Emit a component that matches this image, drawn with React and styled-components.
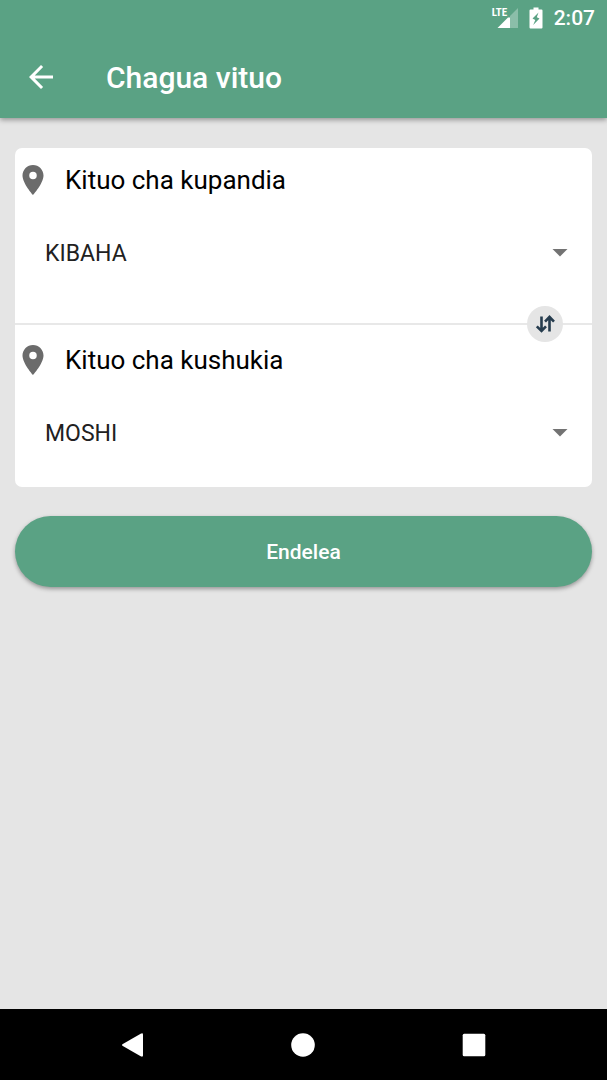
import React, { useState } from 'react';
import styled, { createGlobalStyle } from 'styled-components';

const GlobalStyle = createGlobalStyle`
  * {
    box-sizing: border-box;
  }

  body {
    margin: 0;
    background: #e5e5e5;
    font-family: Roboto, 'Liberation Sans', sans-serif;
  }

  button,
  select {
    font-family: inherit;
  }
`;

const Screen = styled.div`
  min-height: 100vh;
  display: flex;
  flex-direction: column;
`;

const Header = styled.header`
  background: #5aa284;
  color: #fff;
  box-shadow: 0 2px 5px rgba(0, 0, 0, 0.35);
`;

const StatusBar = styled.div`
  height: 36px;
  padding: 0 12px;
  display: flex;
  align-items: center;
  justify-content: flex-end;
  gap: 11px;
`;

const Signal = styled.div`
  position: relative;
  display: flex;
`;

const NetworkType = styled.span`
  position: absolute;
  top: 0;
  left: 0;
  font-family: 'Roboto Condensed', 'Liberation Sans Narrow', Roboto, sans-serif;
  font-size: 11px;
  font-weight: 700;
  line-height: 11px;
`;

const Clock = styled.span`
  font-size: 21px;
  font-weight: 500;
  line-height: 36px;
`;

const Toolbar = styled.div`
  height: 82px;
  padding: 0 23px;
  display: flex;
  align-items: center;
  gap: 47px;
`;

const IconButton = styled.button`
  display: flex;
  padding: 0;
  border: 0;
  background: none;
  color: inherit;
  cursor: pointer;
`;

const Title = styled.h1`
  margin: 0;
  padding-top: 2px;
  font-size: 30px;
  font-weight: 500;
  line-height: 36px;
`;

const Main = styled.main`
  flex: 1;
  padding: 30px 15px;
  display: flex;
  flex-direction: column;
  gap: 29px;
`;

const Card = styled.div`
  background: #fff;
  border-radius: 7px;
`;

const Station = styled.section`
  padding: ${({ $last }) => ($last ? '17px 0 20px' : '14px 0 36px')};
  display: flex;
  flex-direction: column;
  gap: 19px;
`;

const StationLabel = styled.label`
  display: flex;
  align-items: center;
  gap: 14px;
  color: #000;
  font-size: 26px;
  line-height: 36px;

  svg {
    color: #6b6b6b;
  }
`;

const SelectWrap = styled.div`
  display: grid;
  align-items: center;

  > * {
    grid-area: 1 / 1;
  }

  svg {
    justify-self: end;
    margin-right: 14px;
    color: #737373;
    pointer-events: none;
  }
`;

const Select = styled.select`
  width: 100%;
  height: 70px;
  padding: 2px 58px 0 30px;
  border: 0;
  background: transparent;
  color: #212121;
  font-size: 23px;
  appearance: none;
`;

const Divider = styled.div`
  position: relative;
  height: 2px;
  background: #e8e8e8;
`;

const SwapButton = styled(IconButton)`
  position: absolute;
  top: -17px;
  right: 29px;
  width: 36px;
  height: 36px;
  align-items: center;
  justify-content: center;
  border-radius: 50%;
  background: #e5e5e5;
  color: #263c4e;
`;

const SubmitButton = styled.button`
  height: 71px;
  border: 0;
  border-radius: 36px;
  background: #5aa284;
  box-shadow: 0 2px 4px rgba(0, 0, 0, 0.35);
  color: #fff;
  font-size: 21px;
  font-weight: 500;
  cursor: pointer;
`;

const NavBar = styled.nav`
  height: 71px;
  padding: 0 48px;
  display: flex;
  background: #000;
  color: #fff;
`;

const NavButton = styled(IconButton)`
  flex: 1;
  align-items: center;
  justify-content: center;
`;

const PinIcon = () => (
  <svg width="36" height="36" viewBox="0 0 24 24" fill="currentColor" aria-hidden="true">
    <path d="M12 2C8.13 2 5 5.13 5 9c0 5.25 7 13 7 13s7-7.75 7-13c0-3.87-3.13-7-7-7zm0 9.5a2.5 2.5 0 1 1 0-5 2.5 2.5 0 0 1 0 5z" />
  </svg>
);

const stations = ['KIBAHA', 'MOSHI'];

const StationField = ({ id, label, value, onChange, last }) => (
  <Station $last={last}>
    <StationLabel htmlFor={id}>
      <PinIcon />
      {label}
    </StationLabel>
    <SelectWrap>
      <Select id={id} value={value} onChange={(e) => onChange(e.target.value)}>
        {stations.map((name) => (
          <option key={name}>{name}</option>
        ))}
      </Select>
      <svg width="36" height="36" viewBox="0 0 24 24" fill="currentColor" aria-hidden="true">
        <path d="M7 10l5 5 5-5z" />
      </svg>
    </SelectWrap>
  </Station>
);

const App = () => {
  const [from, setFrom] = useState('KIBAHA');
  const [to, setTo] = useState('MOSHI');

  const swap = () => {
    setFrom(to);
    setTo(from);
  };

  return (
    <Screen>
      <GlobalStyle />
      <Header>
        <StatusBar>
          <Signal>
            <NetworkType>LTE</NetworkType>
            <svg width="26" height="22" viewBox="0 0 26 22" fill="#fff" aria-hidden="true">
              <path d="M26 1v20h-8V9L26 1z" opacity="0.3" />
              <path d="M5.5 21L16 10.500H18V21z" />
            </svg>
          </Signal>
          <svg width="14" height="22" viewBox="0 0 14 22" fill="#fff" aria-hidden="true">
            <path
              fillRule="evenodd"
              d="M4.500 0.500h5v2H12.500q1 0 1 1V20.500q0 1-1 1H1.500q-1 0-1-1V3.500q0-1 1-1H4.500zM9.500 5.500L3.500 11.500L6.300 13L4.200 18L10.500 11.500L7.800 10.200z"
            />
          </svg>
          <Clock>2:07</Clock>
        </StatusBar>
        <Toolbar>
          <IconButton type="button" aria-label="Rudi">
            <svg width="36" height="36" viewBox="0 0 24 24" fill="currentColor" aria-hidden="true">
              <path d="M20 11H7.830l5.590-5.590L12 4l-8 8 8 8 1.410-1.410L7.830 13H20v-2z" />
            </svg>
          </IconButton>
          <Title>Chagua vituo</Title>
        </Toolbar>
      </Header>

      <Main>
        <Card>
          <StationField id="from" label="Kituo cha kupandia" value={from} onChange={setFrom} />
          <Divider>
            <SwapButton type="button" aria-label="Badilisha" onClick={swap}>
              <svg
                width="20"
                height="20"
                viewBox="0 0 20 20"
                fill="none"
                stroke="currentColor"
                strokeWidth="2.600"
                aria-hidden="true"
              >
                <path d="M6.500 2.500V17M1.800 12.300L6.500 17L11 12.300" />
                <path d="M14.500 17.500V3M10 7.700L14.500 3L19 7.700" />
              </svg>
            </SwapButton>
          </Divider>
          <StationField id="to" label="Kituo cha kushukia" value={to} onChange={setTo} last />
        </Card>
        <SubmitButton type="button">Endelea</SubmitButton>
      </Main>

      <NavBar>
        <NavButton type="button" aria-label="Nyuma">
          <svg width="24" height="24" viewBox="0 0 24 24" fill="currentColor" aria-hidden="true">
            <path d="M1.800 11L19.700 0.700Q22 -0.300 22 1.500V22.500Q22 24.300 19.700 23.300L1.800 13Q0.200 12 1.800 11z" />
          </svg>
        </NavButton>
        <NavButton type="button" aria-label="Nyumbani">
          <svg width="24" height="24" viewBox="0 0 24 24" fill="currentColor" aria-hidden="true">
            <circle cx="12" cy="12" r="11.800" />
          </svg>
        </NavButton>
        <NavButton type="button" aria-label="Programu za karibuni">
          <svg width="24" height="24" viewBox="0 0 24 24" fill="currentColor" aria-hidden="true">
            <rect x="0.700" y="0.700" width="22.600" height="22.600" rx="1.500" />
          </svg>
        </NavButton>
      </NavBar>
    </Screen>
  );
};

export default App;
